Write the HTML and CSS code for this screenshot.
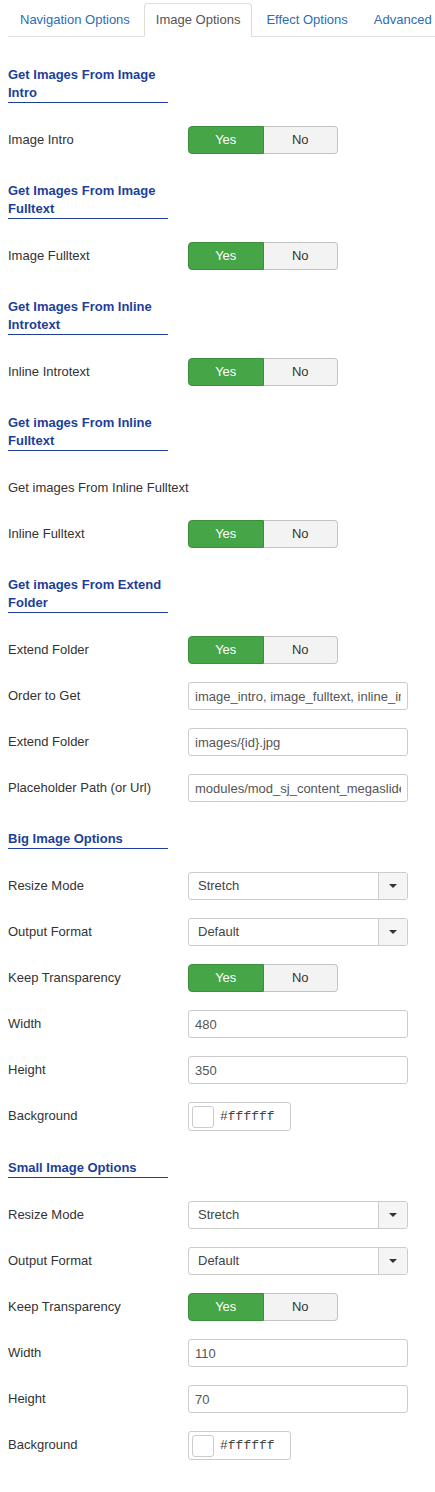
FILE: index.html
```html
<!DOCTYPE html>
<html lang="en">
<head>
<meta charset="utf-8">
<title>Image Options</title>
<link rel="stylesheet" href="styles.css">
</head>
<body>
<div class="page">
  <ul class="tabs">
    <li class="tab"><a>Navigation Options</a></li>
    <li class="tab active"><a>Image Options</a></li>
    <li class="tab"><a>Effect Options</a></li>
    <li class="tab"><a>Advanced</a></li>
  </ul>

  <div class="tab-content">
    <h4 class="spacer">Get Images From Image Intro</h4>
    <div class="group">
      <label class="label">Image Intro</label>
      <div class="controls"><div class="toggle"><span class="yes">Yes</span><span class="no">No</span></div></div>
    </div>

    <h4 class="spacer">Get Images From Image Fulltext</h4>
    <div class="group">
      <label class="label">Image Fulltext</label>
      <div class="controls"><div class="toggle"><span class="yes">Yes</span><span class="no">No</span></div></div>
    </div>

    <h4 class="spacer">Get Images From Inline Introtext</h4>
    <div class="group">
      <label class="label">Inline Introtext</label>
      <div class="controls"><div class="toggle"><span class="yes">Yes</span><span class="no">No</span></div></div>
    </div>

    <h4 class="spacer">Get images From Inline Fulltext</h4>
    <div class="group">
      <div class="desc">Get images From Inline Fulltext</div>
    </div>
    <div class="group">
      <label class="label">Inline Fulltext</label>
      <div class="controls"><div class="toggle"><span class="yes">Yes</span><span class="no">No</span></div></div>
    </div>

    <h4 class="spacer">Get images From Extend Folder</h4>
    <div class="group">
      <label class="label">Extend Folder</label>
      <div class="controls"><div class="toggle"><span class="yes">Yes</span><span class="no">No</span></div></div>
    </div>
    <div class="group">
      <label class="label">Order to Get</label>
      <div class="controls"><input class="text" type="text" value="image_intro, image_fulltext, inline_introtext, inline_fulltext, external" readonly></div>
    </div>
    <div class="group">
      <label class="label">Extend Folder</label>
      <div class="controls"><input class="text" type="text" value="images/{id}.jpg" readonly></div>
    </div>
    <div class="group">
      <label class="label">Placeholder Path (or Url)</label>
      <div class="controls"><input class="text" type="text" value="modules/mod_sj_content_megaslider/assets/images/nophoto.jpg" readonly></div>
    </div>

    <h4 class="spacer">Big Image Options</h4>
    <div class="group">
      <label class="label">Resize Mode</label>
      <div class="controls"><div class="select"><span class="select-value">Stretch</span><span class="select-arrow"><i class="caret"></i></span></div></div>
    </div>
    <div class="group">
      <label class="label">Output Format</label>
      <div class="controls"><div class="select"><span class="select-value">Default</span><span class="select-arrow"><i class="caret"></i></span></div></div>
    </div>
    <div class="group">
      <label class="label">Keep Transparency</label>
      <div class="controls"><div class="toggle"><span class="yes">Yes</span><span class="no">No</span></div></div>
    </div>
    <div class="group">
      <label class="label">Width</label>
      <div class="controls"><input class="text" type="text" value="480" readonly></div>
    </div>
    <div class="group">
      <label class="label">Height</label>
      <div class="controls"><input class="text" type="text" value="350" readonly></div>
    </div>
    <div class="group">
      <label class="label">Background</label>
      <div class="controls"><div class="color"><span class="swatch"></span><span class="color-value">#ffffff</span></div></div>
    </div>

    <h4 class="spacer">Small Image Options</h4>
    <div class="group">
      <label class="label">Resize Mode</label>
      <div class="controls"><div class="select"><span class="select-value">Stretch</span><span class="select-arrow"><i class="caret"></i></span></div></div>
    </div>
    <div class="group">
      <label class="label">Output Format</label>
      <div class="controls"><div class="select"><span class="select-value">Default</span><span class="select-arrow"><i class="caret"></i></span></div></div>
    </div>
    <div class="group">
      <label class="label">Keep Transparency</label>
      <div class="controls"><div class="toggle"><span class="yes">Yes</span><span class="no">No</span></div></div>
    </div>
    <div class="group">
      <label class="label">Width</label>
      <div class="controls"><input class="text" type="text" value="110" readonly></div>
    </div>
    <div class="group">
      <label class="label">Height</label>
      <div class="controls"><input class="text" type="text" value="70" readonly></div>
    </div>
    <div class="group">
      <label class="label">Background</label>
      <div class="controls"><div class="color"><span class="swatch"></span><span class="color-value">#ffffff</span></div></div>
    </div>
  </div>
</div>
</body>
</html>
```

FILE: styles.css
```css
html, body {
  margin: 0;
  padding: 0;
  background: #ffffff;
  overflow-x: hidden;
}

body {
  font-family: "Liberation Sans", Arial, sans-serif;
  font-size: 13px;
  line-height: 18px;
  color: #333333;
}

.page {
  padding: 3px 0 20px 8px;
}

.tabs {
  display: flex;
  flex-wrap: nowrap;
  list-style: none;
  margin: 0;
  padding: 0;
  border-bottom: 1px solid #dddddd;
  white-space: nowrap;
}

.tab {
  margin-right: 2px;
  margin-bottom: -1px;
  flex: none;
}

.tab a {
  display: block;
  padding: 7px 11px 7px;
  border: 1px solid transparent;
  border-radius: 4px 4px 0 0;
  color: #2d6db5;
  line-height: 18px;
}

.tab.active a {
  color: #555555;
  background: #ffffff;
  border-color: #dddddd #dddddd transparent;
}

.tab-content {
  display: flex;
  flex-direction: column;
  align-items: flex-start;
  padding-top: 19px;
}

.spacer {
  width: 160px;
  margin: 10px 0 23px;
  font-size: 13px;
  font-weight: bold;
  line-height: 18px;
  color: #1d3f99;
  border-bottom: 1px solid #1d3f99;
}

.group {
  display: flex;
  align-items: flex-start;
  margin-bottom: 18px;
  min-height: 28px;
}

.label {
  width: 180px;
  flex: none;
  padding-top: 5px;
  line-height: 18px;
  color: #333333;
}

.desc {
  padding-top: 5px;
  line-height: 18px;
  color: #333333;
}

.controls {
  flex: none;
}

.toggle {
  display: flex;
  width: 150px;
  height: 28px;
}

.toggle span {
  flex: 1;
  box-sizing: border-box;
  height: 28px;
  line-height: 26px;
  text-align: center;
  font-size: 13px;
}

.toggle .yes {
  background: #46a546;
  color: #ffffff;
  border: 1px solid #3b8f3b;
  border-radius: 4px 0 0 4px;
}

.toggle .no {
  background: #f3f3f3;
  color: #333333;
  border: 1px solid #c4c4c4;
  border-left: none;
  border-radius: 0 4px 4px 0;
}

.text {
  display: block;
  box-sizing: border-box;
  width: 220px;
  height: 28px;
  margin: 0;
  padding: 4px 6px;
  border: 1px solid #cccccc;
  border-radius: 3px;
  background: #ffffff;
  font-family: "Liberation Sans", Arial, sans-serif;
  font-size: 13px;
  line-height: 18px;
  color: #555555;
  outline: none;
}

.select {
  display: flex;
  box-sizing: border-box;
  width: 220px;
  height: 28px;
  border: 1px solid #cccccc;
  border-radius: 3px;
  background: #ffffff;
  overflow: hidden;
}

.select-value {
  flex: 1;
  padding-left: 9px;
  line-height: 26px;
  color: #444444;
}

.select-arrow {
  width: 28px;
  flex: none;
  display: flex;
  align-items: center;
  justify-content: center;
  border-left: 1px solid #cccccc;
  background: #f5f5f5;
}

.caret {
  display: block;
  width: 0;
  height: 0;
  border-left: 4px solid transparent;
  border-right: 4px solid transparent;
  border-top: 4px solid #333333;
}

.color {
  display: flex;
  align-items: center;
  box-sizing: border-box;
  width: 103px;
  height: 29px;
  padding: 0 3px;
  border: 1px solid #cccccc;
  border-radius: 3px;
  background: #ffffff;
}

.swatch {
  display: block;
  box-sizing: border-box;
  width: 22px;
  height: 22px;
  border: 1px solid #cccccc;
  border-radius: 3px;
  background: #ffffff;
}

.color-value {
  margin-left: 6px;
  font-family: "Liberation Mono", "DejaVu Sans Mono", monospace;
  font-size: 13px;
  color: #444444;
}
```
